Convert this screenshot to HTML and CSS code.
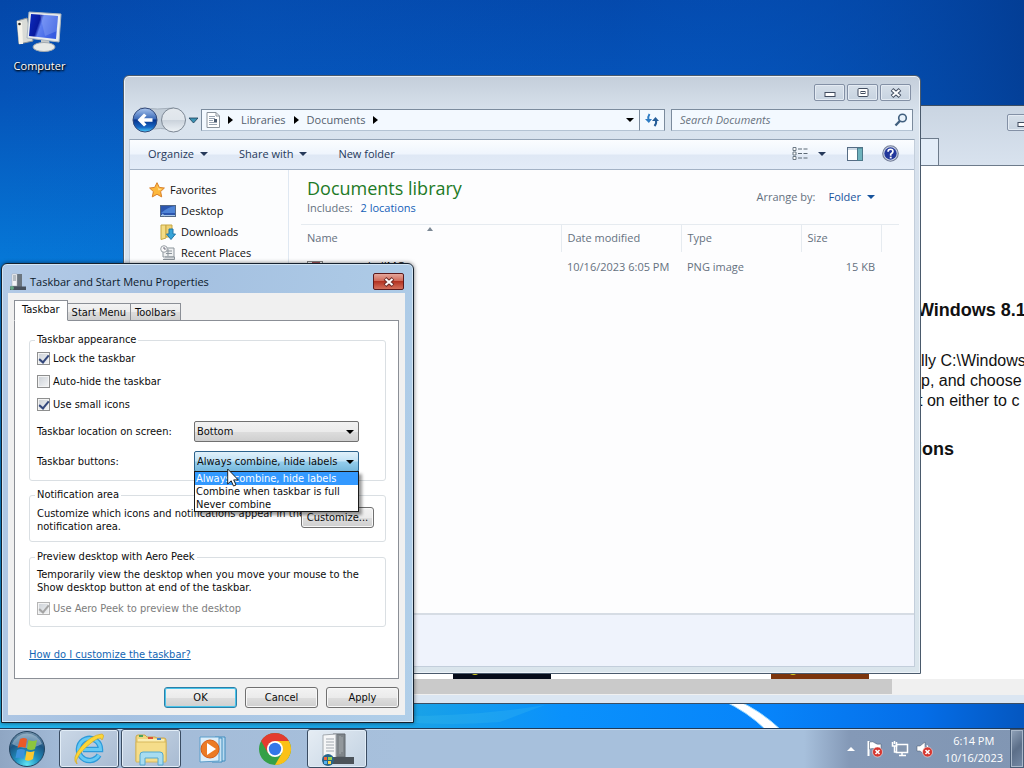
FILE: index.html
```html
<!DOCTYPE html>
<html lang="en">
<head>
<meta charset="utf-8">
<title>Desktop</title>
<link rel="stylesheet" href="styles.css">
</head>
<body class="desktop">
<svg class="wallpaper" viewBox="0 0 1024 768" preserveAspectRatio="none" aria-hidden="true">
  <defs>
    <linearGradient id="sky" x1="0" y1="0" x2="0" y2="1"><stop offset="0" stop-color="#0447a9"/><stop offset=".12" stop-color="#0553b8"/><stop offset=".36" stop-color="#067bda"/><stop offset=".92" stop-color="#1aa2e4"/><stop offset="1" stop-color="#28b8ee"/></linearGradient>
    <linearGradient id="dusk" x1="0" y1="0" x2="1" y2="0"><stop offset="0" stop-color="#0860d0" stop-opacity="0"/><stop offset=".25" stop-color="#0860c8" stop-opacity=".25"/><stop offset=".6" stop-color="#0560d0" stop-opacity=".1"/><stop offset="1" stop-color="#033c92" stop-opacity=".85"/></linearGradient>
    <linearGradient id="floor" x1="0" y1="0" x2="1" y2="0"><stop offset="0" stop-color="#22b4ec"/><stop offset=".4" stop-color="#19a2e6"/><stop offset=".55" stop-color="#0a91fc"/><stop offset=".75" stop-color="#0784fa"/><stop offset=".9" stop-color="#056ee8"/><stop offset="1" stop-color="#0557c0"/></linearGradient>
  </defs>
  <rect width="1024" height="768" fill="url(#sky)"/>
  <rect width="1024" height="768" fill="url(#dusk)"/>
  <rect y="690" width="1024" height="78" fill="url(#floor)"/>
  <path d="M400 716Q480 716 545 705L500 722Q450 726 400 722Z" fill="#4cc8f0" opacity=".2"/>
  <path d="M722 700H736Q760 710 781 730H766Q748 712 722 700Z" fill="#fff" stroke="#9fdcff" stroke-width="1"/>
</svg>

<a class="shortcut" href="#computer">
  <svg class="shortcut-icon" viewBox="0 0 48 44" aria-hidden="true">
    <defs><linearGradient id="scr" x1="0" y1="0" x2="1" y2=".3"><stop offset="0" stop-color="#0d2cc0"/><stop offset=".4" stop-color="#071a9e"/><stop offset=".5" stop-color="#5d7ff0"/><stop offset="1" stop-color="#365be0"/></linearGradient></defs>
    <path d="M1 11 11 8 17 31 3 34Z" fill="#d9dbd7" stroke="#8d9499"/>
    <path d="M1 11 6 12 7 34 3 34Z" fill="#f4f2ea"/><circle cx="3.500" cy="14" r="1.300" fill="#222"/>
    <path d="M25 30h8l1 7h-9z" fill="#c4c8ca"/>
    <ellipse cx="28" cy="37" rx="11" ry="4.500" fill="#e7e9e7" stroke="#a2aab0"/>
    <path d="M13 2 45 4 43 32 11 28Z" fill="#e9edef" stroke="#a9b5bf"/>
    <path d="M15 4 42 6 40 29 13 26Z" fill="url(#scr)"/>
    <path d="M24 5 42 6 41 21 29 26Z" fill="#b8cbff" opacity=".25"/>
  </svg>
  <span>Computer</span>
</a>

<section class="window browser" aria-label="Browser">
  <header class="browser-head">
    <span class="browser-tab"></span>
    <button class="cap browser-min" aria-label="Minimize"><svg viewBox="0 0 12 10"><rect x="1" y="4.500" width="10" height="4" fill="#fff" stroke="#424d60"/></svg></button>
  </header>
  <div class="browser-page">
    <article>
      <h2 class="pg-title">Windows 8.1</h2>
      <p class="pg-copy"><span class="from-a">ally C:\Windows</span><span class="from-b">p, and choose</span><span class="from-c">t on either to c</span></p>
      <h2 class="pg-sub">ions</h2>
    </article>
    <div class="banners">
      <span class="banner"><i></i>Start</span>
      <span class="banner orange"><i></i>Start</span>
    </div>
  </div>
  <div class="hscroll"><span></span></div>
</section>

<section class="window explorer" aria-label="Documents">
  <div class="captions">
    <button class="cap" aria-label="Minimize"><svg viewBox="0 0 12 10"><rect x="1" y="4.500" width="10" height="4" fill="#fff" stroke="#424d60"/></svg></button>
    <button class="cap" aria-label="Maximize"><svg viewBox="0 0 12 10"><rect x="1" y=".5" width="10" height="8" rx="1" fill="#fff" stroke="#424d60"/><rect x="4" y="3.500" width="4" height="2" fill="#fff" stroke="#424d60"/></svg></button>
    <button class="cap" aria-label="Close"><svg viewBox="0 0 12 10"><path d="M2 1.500 10 8.500M10 1.500 2 8.500" stroke="#424d60" stroke-width="4"/><path d="M2.500 2 9.500 8M9.500 2 2.500 8" stroke="#fff" stroke-width="2"/></svg></button>
  </div>
  <div class="address-row">
    <div class="travel">
      <svg class="travel-art" viewBox="0 0 66 28" aria-hidden="true">
        <defs><linearGradient id="bk" x1="0" y1="0" x2="0" y2="1"><stop offset="0" stop-color="#a9c4ec"/><stop offset=".45" stop-color="#3d6cba"/><stop offset=".5" stop-color="#07348c"/><stop offset=".8" stop-color="#1567c4"/><stop offset="1" stop-color="#4fd0fa"/></linearGradient>
        <linearGradient id="fw" x1="0" y1="0" x2="0" y2="1"><stop offset="0" stop-color="#e4e9ee"/><stop offset=".5" stop-color="#dfe5eb"/><stop offset=".52" stop-color="#cbd3dc"/><stop offset="1" stop-color="#eef3f7"/></linearGradient></defs>
        <path d="M8 2Q26 4 42 2L46 25Q28 20 12 25Z" fill="#c2cdd8" stroke="#a4afbb"/>
        <circle cx="13" cy="14" r="12" fill="url(#bk)" stroke="#32497a"/>
        <path d="M5.500 14 12 7.500 14.500 9.500 12 12.300H20.500V15.700H12L14.500 18.500 12 20.500Z" fill="#fff"/>
        <circle cx="41.500" cy="14" r="12" fill="url(#fw)" stroke="#7c8794"/>
        <path d="M57 12h9l-4.500 5z" fill="#3b93b4" stroke="#1d3f58" stroke-width=".8"/>
      </svg>
    </div>
    <nav class="crumbs" aria-label="Address">
      <svg class="doc" viewBox="0 0 14 16" aria-hidden="true"><path d="M1 .5H10L13.500 4V15.500H1Z" fill="#fff" stroke="#8a939c"/><path d="M3 4.500h6M3 6.500h6M3 8.500h4M3 10.500h8M3 12.500h8" stroke="#98a4b2"/><path d="M10 .5V4h3.500" fill="none" stroke="#8a939c"/><rect x="8" y="7" width="3" height="3" fill="#4d5c70"/></svg>
      <i class="tri-r"></i><a href="#libraries">Libraries</a><i class="tri-r"></i><a href="#documents">Documents</a><i class="tri-r"></i>
      <i class="tri-d push"></i>
    </nav>
    <button class="refresh" aria-label="Refresh"><svg viewBox="0 0 14 14"><path d="M4.500 1Q2.500 4 3.500 7" fill="none" stroke="#2e7cc4" stroke-width="2"/><path d="M0 6h7L3.800 10Z" fill="#2e7cc4"/><path d="M9.500 13Q12 10 10.800 7" fill="none" stroke="#245c98" stroke-width="2"/><path d="M7 8h7L10.500 4Z" fill="#245c98"/></svg></button>
    <label class="search"><input type="text" placeholder="Search Documents" aria-label="Search Documents"><svg viewBox="0 0 14 14" aria-hidden="true"><circle cx="8.500" cy="5" r="3.800" fill="#e8f2fb" stroke="#41607f" stroke-width="1.600"/><path d="M5.800 8 1.500 12.500" stroke="#41607f" stroke-width="2.400"/></svg></label>
  </div>
  <div class="client">
    <div class="toolbar">
      <button class="tool t1">Organize <i class="tri-d"></i></button>
      <button class="tool t2">Share with <i class="tri-d"></i></button>
      <button class="tool">New folder</button>
      <button class="tool views" aria-label="Change view"><svg viewBox="0 0 16 14"><path d="M1 .5h3v3H1zM1 5h3v3H1zM1 9.500h3v3H1z" fill="#fff" stroke="#6b7884"/><path d="M6 2h4M11.500 2H15.500M6 6.500h4M11.500 6.500H15.500M6 11h4M11.500 11H15.500" stroke="#5b6874"/></svg><i class="tri-d"></i></button>
      <button class="tool pane" aria-label="Preview pane"><svg viewBox="0 0 16 14"><rect x=".5" y=".5" width="15" height="13" fill="#fff" stroke="#566c84"/><path d="M1 2h10" stroke="#9cb4cc"/><rect x="10.500" y="1" width="5" height="12.500" fill="#6fb3bd" stroke="#4c7889"/></svg></button>
      <button class="tool help" aria-label="Help"><svg viewBox="0 0 16 16"><circle cx="8" cy="8" r="7.300" fill="#cbd4e4" stroke="#737d98"/><circle cx="8" cy="8" r="5.800" fill="#22379b"/><path d="M5.700 6.300Q5.700 4 8 4T10.300 6.200Q10.300 7.400 8.200 8.600V10" fill="none" stroke="#fff" stroke-width="1.600"/><rect x="7.300" y="11" width="1.800" height="1.600" fill="#fff"/></svg></button>
    </div>
    <div class="body">
      <nav class="tree" aria-label="Favorites">
        <a class="fav" href="#fav"><svg viewBox="0 0 16 16"><path d="M8 .7 10.300 5.400 15.400 6 11.600 9.600 12.700 14.900 8 12.300 3.300 14.900 4.400 9.600.6 6 5.700 5.400Z" fill="#fdb83c" stroke="#d9802a"/><path d="M8 3 9.500 6.500 13 7 9.500 8.500Z" fill="#ffe59a"/></svg>Favorites</a>
        <a href="#desk"><svg viewBox="0 0 16 16"><rect x=".5" y="2.500" width="15" height="11" fill="#2c56ae" stroke="#536884"/><path d="M1 10Q8 4 15 3V10Z" fill="#4e84d6"/><path d="M1 12.500h14M2 11l3 2" stroke="#a9c8e8"/></svg>Desktop</a>
        <a href="#down"><svg viewBox="0 0 16 16"><path d="M1 1H6V14L1 15.500Z" fill="#f3dc86" stroke="#c7a743"/><path d="M6 1H12V13H6Z" fill="#eed176" stroke="#c7a743"/><path d="M9 5h4v5h2.500L11 15.500 6.500 10H9Z" fill="#36a4d8" stroke="#2177a8"/></svg>Downloads</a>
        <a href="#recent"><svg viewBox="0 0 16 16"><path d="M3 3H14V12H3Z" fill="#eef0f1" stroke="#8b949b"/><path d="M6 6h6M6 8.500h6M8 4v7" stroke="#8b949b"/><circle cx="4" cy="4" r="3.300" fill="#fafafa" stroke="#98a0a6"/><path d="M4 2v2h1.800" fill="none" stroke="#667"/><path d="M3 14.500H14.500V12H5" fill="#d5d9dc" stroke="#8b949b"/></svg>Recent Places</a>
      </nav>
      <main class="library">
        <div class="lib-head">
          <div><h1>Documents library</h1><p>Includes: <a href="#locations">2 locations</a></p></div>
          <button class="arrange">Arrange by: <b>Folder</b> <i class="tri-d"></i></button>
        </div>
        <table class="files">
          <thead><tr><th class="c-name">Name<i class="sort"></i></th><th class="c-120">Date modified</th><th class="c-120">Type</th><th class="c-80">Size</th><th class="c-end"></th></tr></thead>
          <tbody><tr><td class="name"><svg viewBox="0 0 16 14"><rect x=".5" y=".5" width="15" height="13" fill="#fff" stroke="#888"/><rect x="5" y="1" width="8" height="10" fill="#a6545c"/></svg>recordedIMG</td><td>10/16/2023 6:05 PM</td><td>PNG image</td><td class="num">15 KB</td><td></td></tr></tbody>
        </table>
      </main>
    </div>
    <footer class="details"></footer>
  </div>
</section>

<section class="window dialog" role="dialog" aria-label="Taskbar and Start Menu Properties">
  <header class="dlg-title">
    <svg viewBox="0 0 18 18" aria-hidden="true"><path d="M4 1h9v13H4z" fill="#6b757e"/><path d="M3 1h5v12H3z" fill="#f3f5f7" stroke="#a4abb2" stroke-width=".5"/><path d="M4 3h3M4 5h3M4 7h3" stroke="#7d8790"/><path d="M1 13.500h16v3.500H1z" fill="#47515c"/><circle cx="3" cy="15" r="2" fill="#64a684"/></svg>
    <span>Taskbar and Start Menu Properties</span>
    <button class="close" aria-label="Close"><svg viewBox="0 0 12 10"><path d="M2 1.500 10 8.500M10 1.500 2 8.500" stroke="#6b2c28" stroke-width="4"/><path d="M2.500 2 9.500 8M9.500 2 2.500 8" stroke="#fff" stroke-width="2"/></svg></button>
  </header>
  <form class="dlg-client">
    <div class="tabs" role="tablist"><button type="button" role="tab" class="tab active">Taskbar</button><button type="button" role="tab" class="tab">Start Menu</button><button type="button" role="tab" class="tab">Toolbars</button></div>
    <div class="panel">
      <fieldset class="appearance">
        <legend>Taskbar appearance</legend>
        <label class="check"><input type="checkbox" checked>Lock the taskbar</label>
        <label class="check"><input type="checkbox">Auto-hide the taskbar</label>
        <label class="check"><input type="checkbox" checked>Use small icons</label>
        <div class="pick"><label for="loc">Taskbar location on screen:</label><span class="combo"><select id="loc"><option>Bottom</option></select><i class="tri-d"></i></span></div>
        <div class="pick"><label for="btns">Taskbar buttons:</label><span class="combo open"><select id="btns"><option>Always combine, hide labels</option></select><i class="tri-d"></i>
          <ul class="list" role="listbox" aria-label="Taskbar buttons"><li role="option" aria-selected="true" class="sel">Always combine, hide labels</li><li role="option">Combine when taskbar is full</li><li role="option">Never combine</li></ul></span></div>
      </fieldset>
      <fieldset class="notify">
        <legend>Notification area</legend>
        <p>Customize which icons and notifications appear in the<br>notification area.</p>
        <button type="button" class="btn">Customize...</button>
      </fieldset>
      <fieldset class="peek">
        <legend>Preview desktop with Aero Peek</legend>
        <p>Temporarily view the desktop when you move your mouse to the<br>Show desktop button at end of the taskbar.</p>
        <label class="check off"><input type="checkbox" checked disabled>Use Aero Peek to preview the desktop</label>
      </fieldset>
      <a class="help-link" href="#help">How do I customize the taskbar?</a>
    </div>
    <div class="actions"><button type="button" class="btn default">OK</button><button type="button" class="btn">Cancel</button><button type="button" class="btn">Apply</button></div>
  </form>
</section>

<footer class="taskbar">
  <button class="start" aria-label="Start">
    <svg viewBox="0 0 38 38"><defs><radialGradient id="orb" cx=".5" cy=".95" r=".95"><stop offset="0" stop-color="#5ee6f4"/><stop offset=".35" stop-color="#2191c0"/><stop offset=".7" stop-color="#1b5583"/><stop offset="1" stop-color="#7795ad"/></radialGradient></defs>
      <circle cx="19" cy="19" r="17.500" fill="url(#orb)" stroke="#23435f"/>
      <path d="M4 14A16 16 0 0 1 34 14Q19 22 4 14Z" fill="#dcebf5" opacity=".4"/>
      <path d="M12 9Q16 7 19 9L17.500 18Q13.500 16 9.500 18Z" fill="#ea5a28"/><path d="M20.500 10Q25 12 29 10L27 19Q23 21 19 19Z" fill="#8cc63e"/>
      <path d="M9 20Q13 18 17 20L15.500 29Q12 27 7.500 28Z" fill="#3d92dc"/><path d="M18.500 21Q22 23 26.500 21L25 29Q21 32 17 30Z" fill="#fcc830"/></svg>
  </button>
  <button class="task open" aria-label="Internet Explorer"><svg viewBox="0 0 34 34"><path d="M27 23A11 11 0 1 1 28.500 17.500H11" fill="none" stroke="#2d9bda" stroke-width="5.500"/><path d="M27 23A11 11 0 1 1 28.500 17.500H11" fill="none" stroke="#66c9f3" stroke-width="3"/><path d="M5 32Q-1 27 9 15T30 2Q33 3 30 8Q29 3 19 11T6 25Q3 29 5 32Z" fill="#fbd638" stroke="#d9a920" stroke-width=".7"/></svg></button>
  <button class="task open" aria-label="Windows Explorer"><svg viewBox="0 0 34 34"><path d="M2 5Q2 3 4 3H11L13 5H21L23 6H30Q32 6 32 8V29H2Z" fill="#f1d77f" stroke="#c9a64d"/><path d="M4 7H30V28H4Z" fill="#faedb2"/><path d="M2 10H32V30H2Z" fill="#f5dd8a" stroke="#d8b95c"/><path d="M5 4h4" stroke="#4aa45b" stroke-width="2"/><path d="M14 6h5" stroke="#dd5234" stroke-width="2"/><path d="M23 7h4" stroke="#4284cd" stroke-width="2"/><path d="M6 33V23Q6 20 9 20H26Q29 20 29 23V33H24V26H11V33Z" fill="#a7dcf1" stroke="#55a8cf"/></svg></button>
  <button class="task" aria-label="Media Player"><svg viewBox="0 0 34 34"><path d="M19 5H29V29H19" fill="#b9daf0" stroke="#408dbe"/><path d="M16 6H26V30H16" fill="#c8e3f4" stroke="#408dbe"/><path d="M4 5H23V29L4 30Z" fill="#dceefa" stroke="#5b9ecb"/><circle cx="14" cy="17" r="9" fill="#ec7b25" stroke="#d65c16"/><path d="M11 11 20 17 11 23Z" fill="#fff"/></svg></button>
  <button class="task" aria-label="Chrome"><svg viewBox="0 0 34 34"><circle cx="17" cy="17" r="16" fill="#34a047"/><path d="M3.140 9A16 16 0 0 1 30.860 9H17L10 21Z" fill="#e33b2e"/><path d="M30.860 9A16 16 0 0 1 17 33L24 21 17 9Z" fill="#fbc116"/><circle cx="17" cy="17" r="8" fill="#fff"/><circle cx="17" cy="17" r="6.200" fill="#3277e8"/></svg></button>
  <button class="task open active" aria-label="Taskbar Properties"><svg viewBox="0 0 34 34"><path d="M13 2H25V25H13Z" fill="#7f858a" stroke="#63696f"/><path d="M20 4v18M22 5v15" stroke="#a6abae"/><path d="M3 3 16 2V26H3Z" fill="#f5f6f7" stroke="#a2a8ae"/><path d="M6 7h8M6 10h8M6 13h8M6 16h8M6 19h8" stroke="#a2a9b0"/><path d="M3 25H34V32H3Z" fill="#4c535a"/><circle cx="8" cy="28" r="6" fill="#26658a"/><path d="M4 25h3v3H4z" fill="#ee653b"/><path d="M8 25h4v3H8z" fill="#97cf4c"/><path d="M4 29h3v3H4z" fill="#56b1ef"/><path d="M8 29h3v3H8z" fill="#ffd545"/></svg></button>
  <div class="tray">
    <i class="tri-u"></i>
    <svg viewBox="0 0 18 18" aria-label="Action Center"><path d="M2.500 1V16" stroke="#fff" stroke-width="2"/><path d="M3.500 2Q7 1 9 3T15 4V10Q11 10 9 9T3.500 9Z" fill="#fff" stroke="#44546b" stroke-width=".5"/><circle cx="11.500" cy="12" r="5" fill="#d5362f" stroke="#fff" stroke-width=".5"/><path d="M9.500 10 13.500 14M13.500 10 9.500 14" stroke="#fff" stroke-width="1.600"/></svg>
    <svg viewBox="0 0 18 18" aria-label="Network"><rect x="5.500" y="4.500" width="11" height="8" fill="#8496af" stroke="#fff" stroke-width="1.500"/><path d="M8 15.500h7M11 13v2" stroke="#fff" stroke-width="1.500"/><path d="M1.500 2V6H5.500V2M3.500 1V4M3.500 6V12H6" fill="none" stroke="#fff" stroke-width="1.500"/></svg>
    <svg viewBox="0 0 18 18" aria-label="Volume"><path d="M1 6H4L9 2V15L4 11H1Z" fill="#fff" stroke="#44546b" stroke-width=".5"/><path d="M11 5Q13 8 11 11" fill="none" stroke="#fff"/><circle cx="11.500" cy="12" r="5" fill="#d5362f" stroke="#fff" stroke-width=".5"/><path d="M9.500 10 13.500 14M13.500 10 9.500 14" stroke="#fff" stroke-width="1.600"/></svg>
    <time class="clock"><span>6:14 PM</span><span>10/16/2023</span></time>
  </div>
  <button class="show-desktop" aria-label="Show desktop"></button>
</footer>

<svg class="cursor" viewBox="0 0 12 19" aria-hidden="true"><path d="M.7 1V16L4.200 12.800 6.500 18 9 17 6.700 11.900H11.200Z" fill="#fff" stroke="#111" stroke-width=".9"/></svg>
</body>
</html>
```
FILE: styles.css
```css
* { box-sizing: border-box; }
.desktop { margin: 0; height: 100vh; overflow: hidden; position: relative; font: 11px/16px "Open Sans", sans-serif; color: #1a1a1a; }
.desktop button, .desktop input, .desktop select { font: inherit; color: inherit; margin: 0; }
.desktop button { padding: 0; border: 0; background: none; }
.desktop a { text-decoration: none; color: inherit; }
p, h1, h2, ul { margin: 0; padding: 0; }
i { display: inline-block; font-style: normal; }
.wallpaper { position: absolute; inset: 0; width: 100%; height: 100%; }
.window { position: absolute; }

.tri-d { width: 0; height: 0; border: 4px solid transparent; border-top: 4px solid currentColor; border-bottom: 0; flex: none; }
.tri-r { width: 0; height: 0; border: 4px solid transparent; border-left: 5px solid #000; border-right: 0; flex: none; }
.tri-u { width: 0; height: 0; border: 4px solid transparent; border-bottom: 4px solid #fff; border-top: 0; }

.shortcut { position: absolute; left: 2px; top: 10px; width: 75px; display: flex; flex-direction: column; align-items: center; gap: 4px; text-shadow: 1px 1px 2px #000, 0 1px 2px #000; }
.desktop .shortcut { color: #fff; }
.shortcut-icon { width: 48px; height: 44px; }

/* Browser window at the back */
.browser { left: 400px; right: 0; top: 105px; bottom: 64px; overflow: hidden; border: 1px solid #3c4e63; border-right: 0; background: #dbe6f2; display: flex; flex-direction: column; padding-bottom: 8px; }
.browser-head { flex: none; height: 60px; display: flex; align-items: flex-end; gap: 68px; overflow: hidden; border-bottom: 1px solid #6d7b8b; background: linear-gradient(#cad5e2, #d8e2ee); padding-left: 440px; }
.browser-tab { flex: none; width: 98px; height: 27px; border: 1px solid #6d7b8b; border-bottom: 0; background: #e3edf8; }
.desktop .browser-min { flex: none; align-self: flex-start; margin-top: 8px; }
.browser-page { flex: 1; min-height: 0; background: #fff; display: flex; flex-direction: column; justify-content: space-between; overflow: hidden; white-space: nowrap; font: 16px/20px "Liberation Sans", sans-serif; color: #111; padding-top: 132px; }
.pg-title, .pg-sub { font-size: 18px; line-height: 24px; }
.pg-title { padding-left: 516px; }
.pg-copy { margin: 29px 0 26px; }
.pg-copy span { display: block; }
.from-a { padding-left: 511px; }
.from-b { padding-left: 520px; }
.from-c { padding-left: 517px; }
.pg-sub { padding-left: 516px; }
.banners { display: flex; gap: 220px; padding-left: 52px; }
.banner { width: 98px; height: 26px; background: #060c1a; color: #fff; font: bold 16px/16px "Liberation Sans", sans-serif; padding: 8px 0 0 18px; display: flex; align-items: flex-start; gap: 8px; }
.banner i { width: 8px; height: 14px; background: #d8cf20; border-radius: 4px; flex: none; }
.banner.orange { background: #7b340c; }
.hscroll { flex: none; height: 16px; background: #f0f0f0; }
.hscroll span { display: block; width: 491px; height: 15px; background: #cacaca; }

/* Explorer window */
.explorer { left: 123px; right: 103px; top: 75px; bottom: 94px; border: 1px solid #4a5a6c; border-radius: 6px 6px 0 0; background: linear-gradient(#c4ceda, #dae4ee 40px, #d7e1ed 90px, #dae5ec); box-shadow: inset 0 0 0 1px #edf3f9; padding: 8px 5px 6px; display: flex; flex-direction: column; }
.captions { display: flex; justify-content: flex-end; gap: 2px; padding-right: 4px; height: 25px; }
.desktop .cap { width: 31px; height: 17px; border: 1px solid #8390a5; border-radius: 2px; background: linear-gradient(#d6dfe9, #c7d3e0); box-shadow: inset 0 0 0 1px #e4ebf3; display: flex; align-items: center; justify-content: center; }
.cap svg, .close svg { width: 12px; height: 10px; }
.address-row { display: flex; height: 22px; align-items: center; margin-bottom: 8px; padding: 0 2px 0 3px; color: #53606e; }
.travel { width: 69px; flex: none; display: flex; }
.travel-art { width: 66px; height: 28px; flex: none; }
.crumbs { flex: 1; height: 22px; display: flex; align-items: center; gap: 8px; padding: 0 5px 0 4px; border: 1px solid #7b8b9d; border-bottom-color: #b4c3d3; background: #f3f9ff; }
.crumbs .push { margin-left: auto; color: #000; }
.doc { width: 14px; height: 16px; }
.desktop .refresh { width: 26px; height: 22px; margin-left: -1px; border: 1px solid #7b8b9d; border-bottom-color: #b4c3d3; background: #f3f9ff; display: flex; align-items: center; justify-content: center; }
.refresh svg { width: 14px; height: 14px; }
.search { width: 242px; height: 22px; margin-left: 6px; border: 1px solid #7b8b9d; border-bottom-color: #b4c3d3; background: #f3f9ff; display: flex; align-items: center; padding: 0 4px 0 8px; }
.search input { flex: 1; min-width: 0; border: 0; padding: 0; background: none; outline: 0; }
.desktop .search input { font-style: italic; }
.search input::placeholder { color: #68727e; opacity: 1; }
.search svg { width: 14px; height: 14px; }
.client { flex: 1; min-height: 0; display: flex; flex-direction: column; border: 1px solid #c3cedb; border-top-color: #94a4b6; background: #fcfdfe; }
.toolbar { flex: none; height: 30px; display: flex; align-items: center; padding: 0 15px 2px 18px; border-bottom: 1px solid #a3b2c5; background: linear-gradient(#fbfdff, #eff5fd 48%, #dfe8f5 52%, #e3ecf8); color: #26395a; }
.desktop .tool { display: flex; align-items: center; gap: 6px; }
.desktop .t1, .desktop .t2 { margin-right: 31px; }
.desktop .views { margin-left: auto; gap: 10px; }
.views svg, .pane svg { width: 16px; height: 14px; }
.desktop .pane { margin-left: 21px; }
.desktop .help { margin-left: 19px; }
.help svg { width: 17px; height: 17px; }
.body { flex: 1; min-height: 0; display: flex; overflow: hidden; }
.tree { flex: none; width: 159px; border-right: 1px solid #dfe8f2; padding: 9px 0 0 30px; color: #111; }
.tree a { display: flex; align-items: center; gap: 5px; height: 21px; }
.tree svg { width: 16px; height: 16px; }
.desktop .tree .fav { margin-left: -11px; }
.library { flex: 1; padding: 0 15px 0 12px; color: #65717e; background: #fdfdfe; }
.lib-head { height: 54px; display: flex; justify-content: space-between; align-items: center; padding: 0 24px 0 6px; }
.lib-head h1 { font-size: 18px; line-height: 22px; font-weight: 400; color: #1d7a26; }
.lib-head p { line-height: 18px; }
.lib-head p a { margin-left: 5px; color: #1460b8; }
.desktop .arrange { display: flex; align-items: center; gap: 6px; }
.arrange b { font-weight: 400; color: #17539c; margin-left: 7px; }
.arrange i { color: #17539c; }
.files { width: 100%; table-layout: fixed; border-collapse: collapse; white-space: nowrap; }
.files th, .files td { padding: 0 6px; text-align: left; font-weight: 400; }
.files th { height: 27px; border-top: 1px solid #e6ebf0; border-right: 1px solid #e6ebf0; position: relative; }
.files th:last-child { border-right: 0; }
.files td { height: 30px; }
.c-120 { width: 120px; }
.c-80 { width: 80px; }
.c-end { width: 18px; }
.files .num { text-align: right; }
.files .name { color: #111; }
.name svg { width: 16px; height: 14px; margin-right: 14px; vertical-align: middle; }
.sort { position: absolute; left: 50%; margin-left: -4px; top: 2px; border: 3px solid transparent; border-bottom: 4px solid #7c8894; border-top: 0; }
.details { flex: none; height: 53px; border-top: 2px solid #d6dce4; background: #eff3fc; }

/* Properties dialog */
.dialog { left: 1px; bottom: 45px; width: 413px; border: 1px solid #16222f; border-radius: 6px 6px 0 0; background: linear-gradient(100deg, #b3cae6, #a5c1e1 40%, #b1cfe9); box-shadow: inset 0 0 0 1px #d4e6f5, 0 0 4px #0008; padding: 0 8px 7px 6px; font-family: "DejaVu Sans Condensed", "DejaVu Sans", sans-serif; font-size: 11px; line-height: 13px; color: #0c0c0c; }
.dlg-title { height: 29px; display: flex; align-items: center; gap: 3px; padding: 6px 1px 0 1px; font: 11px/16px "Open Sans", sans-serif; color: #0c1a2c; }
.dlg-title svg { width: 18px; height: 18px; }
.desktop .close { margin-left: auto; width: 31px; height: 17px; border: 1px solid #5b1a1c; border-radius: 2px; background: linear-gradient(#e5a79c, #cf6a59 46%, #b33322 50%, #d4705c); display: flex; align-items: center; justify-content: center; }
.desktop .close svg { width: 12px; height: 10px; }
.dlg-client { margin: 0; padding: 7px 6px 7px; background: #f0f0f0; }
.tabs { display: flex; align-items: flex-end; height: 21px; margin-bottom: -1px; position: relative; }
.desktop .tab { height: 18px; padding: 0 4px; border: 1px solid #8b8f96; border-left: 0; background: linear-gradient(#f3f3f3, #ebebeb 50%, #dddddd 52%, #d0d0d0); }
.desktop .tab.active { height: 21px; padding: 0 7px 2px; border-left: 1px solid #8b8f96; border-bottom-color: #fff; background: #fff; }
.panel { border: 1px solid #8b8f96; background: #fff; padding: 12px 12px 17px 14px; }
fieldset { margin: 0; min-width: 0; border: 1px solid #dadfe3; border-radius: 3px; padding: 0 7px; }
legend { height: 14px; line-height: 14px; padding: 0 2px; margin-left: -2px; }
.appearance { padding-bottom: 4px; margin-bottom: 7px; }
.check { display: flex; align-items: center; gap: 3px; height: 23px; }
.check input { appearance: none; width: 13px; height: 13px; border: 1px solid #8e8f8f; background: linear-gradient(135deg, #cbd0d6, #f4f5f6); box-shadow: inset 0 0 0 1px #f4f4f4; display: grid; place-items: center; }
.check input:checked::before { content: ""; width: 4px; height: 8px; border: solid #34487c; border-width: 0 2px 2px 0; transform: rotate(40deg); margin-bottom: 2px; }
.check.off { color: #7d7d7d; height: 22px; margin-top: 3px; }
.check.off input { border-color: #b5b5b5; }
.check.off input:checked::before { border-color: #a5a5a5; }
.pick { display: grid; grid-template-columns: 157px 165px; align-items: center; height: 30px; }
.combo { position: relative; height: 21px; display: flex; }
.combo select { appearance: none; width: 100%; height: 21px; padding: 0 2px; border: 1px solid #707070; border-radius: 2px; background: linear-gradient(#f2f2f2, #ebebeb 50%, #dddddd 52%, #cfcfcf); outline: 0; }
.combo > .tri-d { position: absolute; right: 5px; top: 9px; color: #000; }
.combo.open select { border-color: #2c628b; background: linear-gradient(#e0f0fa, #c1e2f5 48%, #94cdec 52%, #76b8dc); }
.list { position: absolute; left: 0; right: 0; top: 20px; z-index: 2; list-style: none; border: 1px solid #1a1a1a; background: #fff; box-shadow: 3px 3px 3px #0006; }
.list li { padding-left: 1px; height: 13px; line-height: 13px; white-space: nowrap; }
.list .sel { background: #3399ff; color: #fff; }
.notify { position: relative; display: flow-root; margin-bottom: 8px; padding-bottom: 8px; }
.notify p, .peek p { padding-top: 5px; white-space: nowrap; }
.notify .btn { position: absolute; right: 11px; top: 5px; }
.peek { padding-bottom: 7px; margin-bottom: 21px; }
.peek p { padding-top: 4px; }
.desktop .help-link { display: block; width: max-content; color: #1466b4; text-decoration: underline; }
.desktop .btn { width: 73px; height: 21px; border: 1px solid #707070; border-radius: 3px; background: linear-gradient(#f3f3f3, #ebebeb 50%, #dddddd 52%, #cfcfcf); box-shadow: inset 0 0 0 1px #f8f8f8; }
.desktop .btn.default { border-color: #2c7fa8; box-shadow: inset 0 0 0 1px #48c4ea; }
.actions { display: flex; justify-content: flex-end; gap: 8px; padding-top: 8px; }

/* Taskbar */
.taskbar { position: absolute; left: 0; right: 0; bottom: 0; height: 40px; display: flex; align-items: stretch; gap: 2px; border-top: 1px solid #203a58; box-shadow: inset 0 1px 0 #c9dcee; background: linear-gradient(90deg, #8fa6c3, #a2bad7 60px, #a7c0dc 400px, #a7c0dc calc(100% - 220px), #8499b7 calc(100% - 175px), #8196b3); }
.desktop .start { width: 57px; display: flex; align-items: center; padding-left: 8px; }
.start svg { width: 38px; height: 38px; }
.desktop .task { width: 60px; display: grid; place-items: center; border-radius: 3px; }
.task svg { width: 34px; height: 34px; }
.desktop .task.open { border: 1px solid #3a4c62; box-shadow: inset 0 0 0 1px #e2edf7; background: linear-gradient(135deg, #cbd8e7, #a8bbd2); }
.desktop .task.active { background: linear-gradient(135deg, #e6edf4, #c2d2e2); }
.tray { margin-left: auto; display: flex; align-items: center; gap: 7px; color: #fff; }
.tray svg { width: 18px; height: 18px; }
.tray .tri-u { margin-right: 4px; }
.clock { display: flex; flex-direction: column; align-items: center; line-height: 17px; margin: 0 5px 0 4px; }
.desktop .show-desktop { width: 14px; border: 1px solid #4a5e78; box-shadow: inset 0 0 0 1px #a9b8ca; background: linear-gradient(135deg, #91a3ba, #5c6f89 50%, #7589a5); }

.cursor { position: absolute; left: 227px; top: 468px; width: 12px; height: 19px; z-index: 5; }
```
